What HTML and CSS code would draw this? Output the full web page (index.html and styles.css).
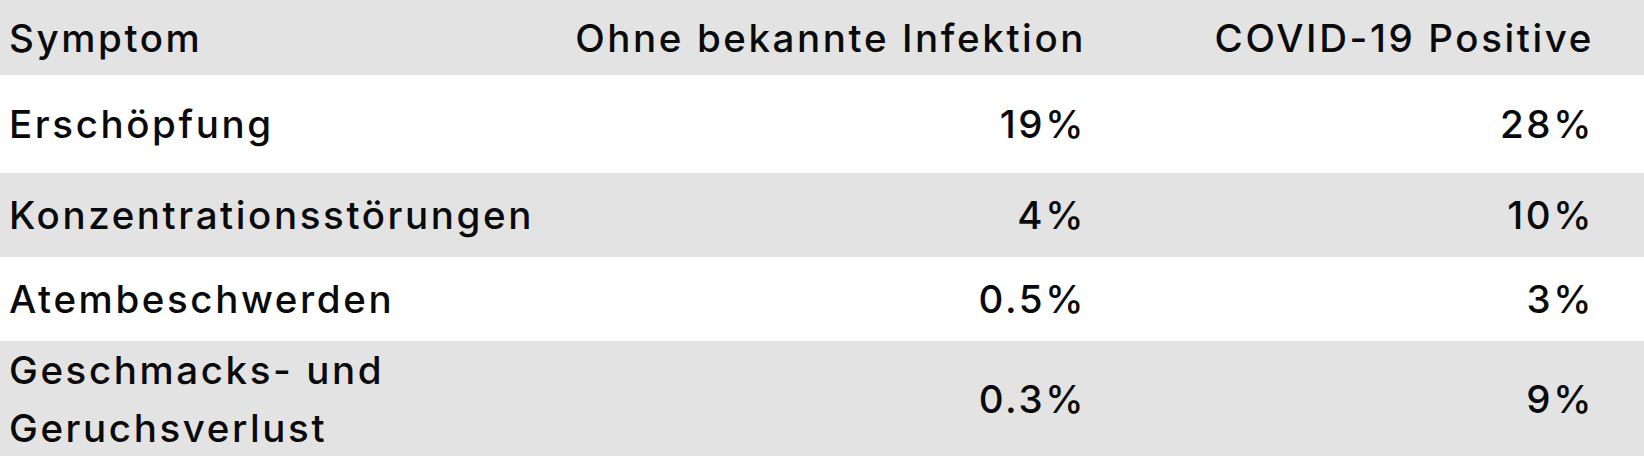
FILE: index.html
```html
<!DOCTYPE html>
<html lang="de">
<head>
<meta charset="utf-8">
<title>Symptome</title>
<link rel="stylesheet" href="styles.css">
</head>
<body>
<div class="table">
  <div class="row head shade">
    <div class="cell name">Symptom</div>
    <div class="cell num mid">Ohne bekannte Infektion</div>
    <div class="cell num last">COVID-19 Positive</div>
  </div>
  <div class="row r1">
    <div class="cell name">Erschöpfung</div>
    <div class="cell num mid">19%</div>
    <div class="cell num last">28%</div>
  </div>
  <div class="row r2 shade">
    <div class="cell name">Konzentrationsstörungen</div>
    <div class="cell num mid">4%</div>
    <div class="cell num last">10%</div>
  </div>
  <div class="row r3">
    <div class="cell name">Atembeschwerden</div>
    <div class="cell num mid">0.5%</div>
    <div class="cell num last">3%</div>
  </div>
  <div class="row r4 shade">
    <div class="cell name">Geschmacks- und Geruchsverlust</div>
    <div class="cell num mid">0.3%</div>
    <div class="cell num last">9%</div>
  </div>
</div>
</body>
</html>
```
FILE: styles.css
```css
html, body {
  margin: 0;
  padding: 0;
  background: #ffffff;
}
.table {
  width: 1644px;
  font-family: "Inter", "Liberation Sans", sans-serif;
  font-weight: 500;
  font-size: 38.5px;
  color: #0a0a0a;
  letter-spacing: 2.6px;
}
.row {
  display: grid;
  grid-template-columns: 566px 534px 544px;
  align-items: center;
  background: #ffffff;
}
.row.shade {
  background: #e3e3e3;
}
.head { height: 75px; }
.r1 { height: 98px; }
.r2 { height: 84px; }
.r3 { height: 84px; }
.r4 { height: 115px; }
.cell {
  line-height: 58px;
}
.name {
  padding-left: 9px;
}
.num {
  text-align: right;
}
.mid {
  padding-right: 14px;
}
.last {
  padding-right: 50px;
}
```
